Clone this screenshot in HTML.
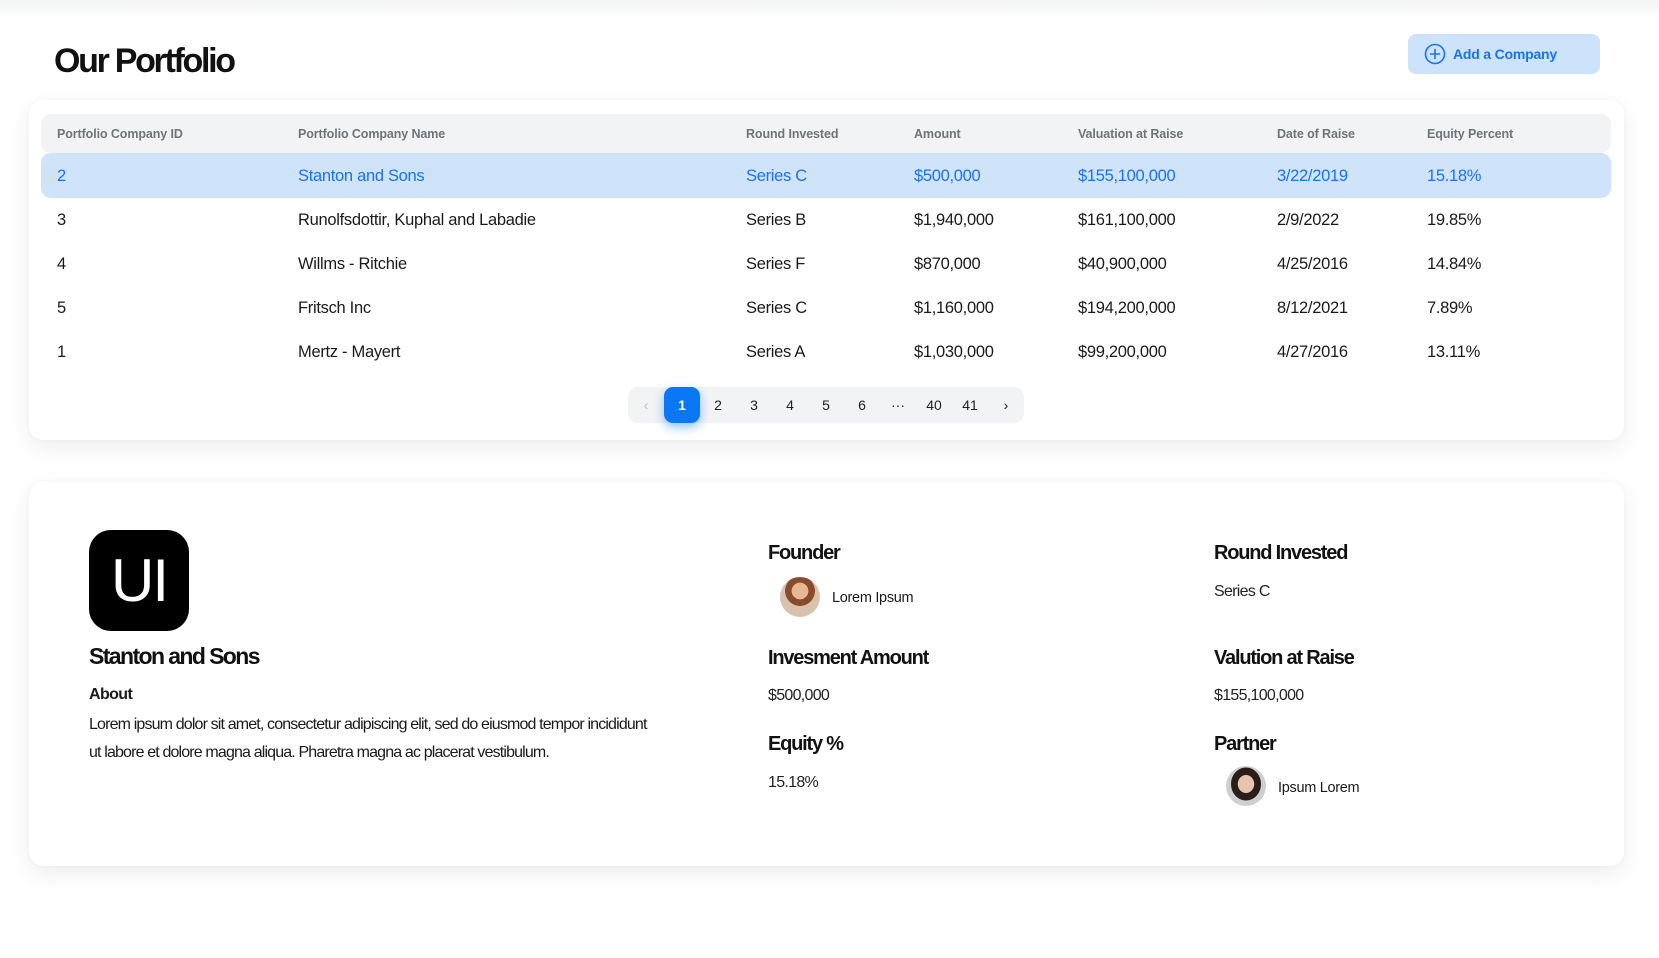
<!DOCTYPE html>
<html><head><meta charset="utf-8"><style>
*{box-sizing:border-box;margin:0;padding:0}
body{width:1659px;height:958px;background:#fff;font-family:"Liberation Sans",sans-serif;color:#1a1a1a;position:relative;overflow:hidden}
.top{position:absolute;left:0;top:0;width:1659px;height:20px;background:linear-gradient(#f3f4f4,#fff)}
h1{position:absolute;left:54px;top:42px;font-size:34px;font-weight:bold;letter-spacing:-2.3px;color:#111}
.btn{position:absolute;left:1408px;top:34px;width:192px;height:40px;background:#cde3fb;border-radius:8px;color:#1a73e8;font-size:14px;font-weight:bold;display:flex;align-items:center;padding-left:16px;gap:7px;letter-spacing:-.2px}
.card{position:absolute;left:29px;width:1595px;background:#fff;border-radius:14px;box-shadow:0 8px 24px rgba(0,0,0,.07),0 0 6px rgba(0,0,0,.03)}
.hdr{position:absolute;left:12px;top:14px;width:1570px;height:39px;background:#f2f3f4;border-radius:10px}
.sel{position:absolute;left:12px;top:53px;width:1570px;height:45px;background:#cfe3fb;border-radius:10px}
.cell{position:absolute;font-size:16.5px;white-space:nowrap;letter-spacing:-.3px}
.h{font-size:12.5px;font-weight:bold;color:#707479;letter-spacing:-.1px}
.b{color:#1a73e8}
.pag{position:absolute;left:599px;top:287px;width:396px;height:36px;background:#f2f3f4;border-radius:10px}
.pg{position:absolute;top:0;width:36px;height:36px;font-size:14px;display:flex;align-items:center;justify-content:center;color:#222}
.act{background:#0a78f5;color:#fff;border-radius:9px;font-weight:bold;box-shadow:0 4px 10px rgba(10,120,245,.45)}
.t{position:absolute;white-space:nowrap;letter-spacing:-.7px}
.lab{font-size:20px;font-weight:bold;letter-spacing:-1.2px;color:#111}
.val{font-size:16px;color:#222;letter-spacing:-.7px}
.av{position:absolute;width:40px;height:40px;border-radius:50%;overflow:hidden}
</style></head><body>
<div class="top"></div>
<h1>Our Portfolio</h1>
<div class="btn"><svg width="22" height="22" viewBox="0 0 22 22"><circle cx="11" cy="11" r="9.5" fill="none" stroke="#1a73e8" stroke-width="1.6"/><path d="M11 6.5v9M6.5 11h9" stroke="#1a73e8" stroke-width="1.6" stroke-linecap="round"/></svg>Add a Company</div>

<div class="card" style="top:100px;height:340px">
<div class="hdr"></div><div class="sel"></div>
<div class="cell h" style="left:28px;top:27px">Portfolio Company ID</div>
<div class="cell h" style="left:269px;top:27px">Portfolio Company Name</div>
<div class="cell h" style="left:717px;top:27px">Round Invested</div>
<div class="cell h" style="left:885px;top:27px">Amount</div>
<div class="cell h" style="left:1049px;top:27px">Valuation at Raise</div>
<div class="cell h" style="left:1248px;top:27px">Date of Raise</div>
<div class="cell h" style="left:1398px;top:27px">Equity Percent</div>

<div class="cell b" style="left:28px;top:67px">2</div><div class="cell b" style="left:269px;top:67px">Stanton and Sons</div><div class="cell b" style="left:717px;top:67px">Series C</div><div class="cell b" style="left:885px;top:67px">$500,000</div><div class="cell b" style="left:1049px;top:67px">$155,100,000</div><div class="cell b" style="left:1248px;top:67px">3/22/2019</div><div class="cell b" style="left:1398px;top:67px">15.18%</div>

<div class="cell" style="left:28px;top:111px">3</div><div class="cell" style="left:269px;top:111px">Runolfsdottir, Kuphal and Labadie</div><div class="cell" style="left:717px;top:111px">Series B</div><div class="cell" style="left:885px;top:111px">$1,940,000</div><div class="cell" style="left:1049px;top:111px">$161,100,000</div><div class="cell" style="left:1248px;top:111px">2/9/2022</div><div class="cell" style="left:1398px;top:111px">19.85%</div>

<div class="cell" style="left:28px;top:155px">4</div><div class="cell" style="left:269px;top:155px">Willms - Ritchie</div><div class="cell" style="left:717px;top:155px">Series F</div><div class="cell" style="left:885px;top:155px">$870,000</div><div class="cell" style="left:1049px;top:155px">$40,900,000</div><div class="cell" style="left:1248px;top:155px">4/25/2016</div><div class="cell" style="left:1398px;top:155px">14.84%</div>

<div class="cell" style="left:28px;top:199px">5</div><div class="cell" style="left:269px;top:199px">Fritsch Inc</div><div class="cell" style="left:717px;top:199px">Series C</div><div class="cell" style="left:885px;top:199px">$1,160,000</div><div class="cell" style="left:1049px;top:199px">$194,200,000</div><div class="cell" style="left:1248px;top:199px">8/12/2021</div><div class="cell" style="left:1398px;top:199px">7.89%</div>

<div class="cell" style="left:28px;top:243px">1</div><div class="cell" style="left:269px;top:243px">Mertz - Mayert</div><div class="cell" style="left:717px;top:243px">Series A</div><div class="cell" style="left:885px;top:243px">$1,030,000</div><div class="cell" style="left:1049px;top:243px">$99,200,000</div><div class="cell" style="left:1248px;top:243px">4/27/2016</div><div class="cell" style="left:1398px;top:243px">13.11%</div>

<div class="pag">
<div class="pg" style="left:0;color:#bbb">‹</div>
<div class="pg act" style="left:36px">1</div>
<div class="pg" style="left:72px">2</div><div class="pg" style="left:108px">3</div><div class="pg" style="left:144px">4</div><div class="pg" style="left:180px">5</div><div class="pg" style="left:216px">6</div><div class="pg" style="left:252px">···</div><div class="pg" style="left:288px">40</div><div class="pg" style="left:324px">41</div><div class="pg" style="left:360px">›</div>
</div>
</div>

<div class="card" style="top:482px;height:384px">
<div style="position:absolute;left:60px;top:48px;width:100px;height:101px;background:#000;border-radius:22px;color:#fff;font-size:60px;font-weight:300;display:flex;align-items:center;justify-content:center;letter-spacing:-2px">UI</div>
<div class="t" style="left:60px;top:161px;font-size:23px;font-weight:bold;letter-spacing:-1.6px;color:#111">Stanton and Sons</div>
<div class="t" style="left:60px;top:204px;font-size:16px;font-weight:bold;letter-spacing:-.6px">About</div>
<div class="t" style="left:60px;top:229px;font-size:16px;line-height:28px;letter-spacing:-.85px;white-space:normal;width:590px">Lorem ipsum dolor sit amet, consectetur adipiscing elit, sed do eiusmod tempor incididunt<br>ut labore et dolore magna aliqua. Pharetra magna ac placerat vestibulum.</div>

<div class="t lab" style="left:739px;top:60px">Founder</div>
<div class="av" style="left:751px;top:95px;background:radial-gradient(circle at 50% 35%,#e8b894 0 25%,#8a4b2c 26% 45%,#d9c2ad 46%)"></div>
<div class="t" style="left:803px;top:108px;font-size:14.5px;letter-spacing:-.3px">Lorem Ipsum</div>
<div class="t lab" style="left:739px;top:165px">Invesment Amount</div>
<div class="t val" style="left:739px;top:205px">$500,000</div>
<div class="t lab" style="left:739px;top:251px">Equity %</div>
<div class="t val" style="left:739px;top:292px">15.18%</div>

<div class="t lab" style="left:1185px;top:60px">Round Invested</div>
<div class="t val" style="left:1185px;top:101px">Series C</div>
<div class="t lab" style="left:1185px;top:165px">Valution at Raise</div>
<div class="t val" style="left:1185px;top:205px">$155,100,000</div>
<div class="t lab" style="left:1185px;top:251px">Partner</div>
<div class="av" style="left:1197px;top:284px;background:radial-gradient(ellipse at 50% 45%,#e9c4ad 0 28%,#2a1e1a 30% 52%,#cfcfd2 54%)"></div>
<div class="t" style="left:1249px;top:298px;font-size:14.5px;letter-spacing:-.3px">Ipsum Lorem</div>
</div>
</body></html>
